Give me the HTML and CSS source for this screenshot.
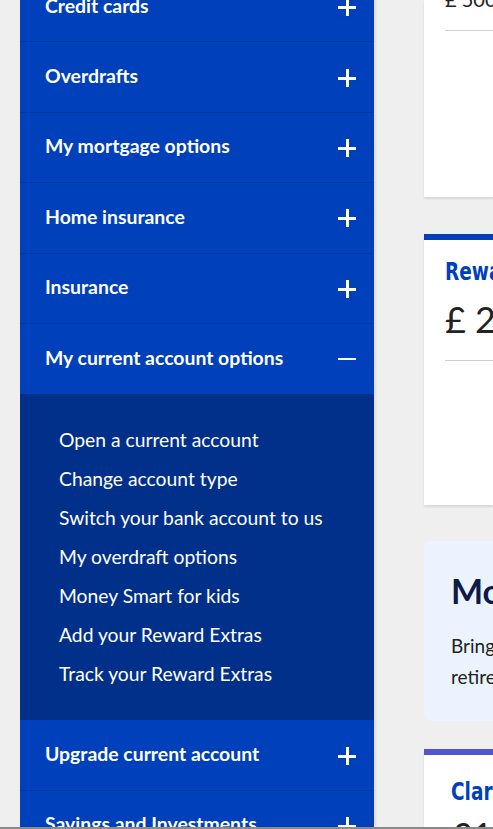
FILE: index.html
```html
<!DOCTYPE html>
<html lang="en">
<head>
    <meta charset="UTF-8">
    <meta name="viewport" content="width=device-width, initial-scale=1.0">
    <title>My current account options</title>
    <link rel="stylesheet" href="styles.css">
</head>
<body>

<div class="page">
    <div class="layout">
        <!-- Side navigation -->
        <nav class="side-nav">
            <div class="nav-item"><span>Credit cards</span><span class="toggle plus"></span></div>
            <div class="nav-item"><span>Overdrafts</span><span class="toggle plus"></span></div>
            <div class="nav-item"><span>My mortgage options</span><span class="toggle plus"></span></div>
            <div class="nav-item"><span>Home insurance</span><span class="toggle plus"></span></div>
            <div class="nav-item"><span>Insurance</span><span class="toggle plus"></span></div>
            <div class="nav-item open"><span>My current account options</span><span class="toggle minus"></span></div>
            <ul class="sub-nav">
                <li><a href="#">Open a current account</a></li>
                <li><a href="#">Change account type</a></li>
                <li><a href="#">Switch your bank account to us</a></li>
                <li><a href="#">My overdraft options</a></li>
                <li><a href="#">Money Smart for kids</a></li>
                <li><a href="#">Add your Reward Extras</a></li>
                <li><a href="#">Track your Reward Extras</a></li>
            </ul>
            <div class="nav-item"><span>Upgrade current account</span><span class="toggle plus"></span></div>
            <div class="nav-item"><span>Savings and Investments</span><span class="toggle plus"></span></div>
        </nav>

        <!-- Right column -->
        <div class="cards">
            <div class="card first">
                <div class="amount small">£ 500.00</div>
                <div class="rule"></div>
            </div>
            <div class="card accent">
                <h3 class="card-title">Reward Extras</h3>
                <div class="amount">£ 2.00</div>
                <div class="rule"></div>
            </div>
            <div class="promo">
                <h2>Money Smart</h2>
                <p>Bring your pensions together<br>retirement planning</p>
            </div>
            <div class="card accent purple">
                <h3 class="card-title">Clarity</h3>
                <div class="amount">£11.00</div>
            </div>
        </div>
    </div>
</div>

</body>
</html>
```

FILE: styles.css
```css
/* General Styles */
body {
    margin: 0;
    background-color: #efefef;
    font-family: Lato, 'Open Sans', sans-serif;
}

.page {
    height: 827px;
    overflow: hidden;
    border-bottom: 2px solid #8a8a8a;
}

.layout {
    display: flex;
    align-items: flex-start;
    gap: 50px;
    margin-top: -28px;
    padding-left: 20px;
}

/* Side navigation */
.side-nav {
    width: 354px;
    flex-shrink: 0;
    background-color: #0040bb;
    box-shadow: 2px 0 2px rgba(0, 0, 0, 0.08);
}

.nav-item {
    display: flex;
    justify-content: space-between;
    align-items: center;
    height: 70.4px;
    box-sizing: border-box;
    padding: 0 18px 3px 25px;
    border-bottom: 1px solid #0037a6;
    color: #fff;
    font-size: 19.4px;
    font-weight: 700;
}

.nav-item.open {
    border-bottom: none;
}

.toggle {
    position: relative;
    width: 18px;
    height: 18px;
    margin-top: 4px;
}

.toggle::before,
.toggle::after {
    content: '';
    position: absolute;
    background-color: #fff;
}

.toggle::before {
    left: 0;
    top: 8px;
    width: 18px;
    height: 3px;
}

.plus::after {
    left: 8px;
    top: 0;
    width: 3px;
    height: 18px;
}

.minus::before {
    top: 7px;
    height: 2px;
}

.sub-nav {
    list-style: none;
    margin: 0;
    padding: 26px 0 27px 39px;
    background-color: #00308a;
}

.sub-nav li {
    height: 39px;
    display: flex;
    align-items: center;
}

.sub-nav a {
    color: #fff;
    text-decoration: none;
    font-size: 19.3px;
}

/* Cards */
.cards {
    flex: 1;
    min-width: 0;
    display: flex;
    flex-direction: column;
    margin-top: 28px;
}

.card {
    background-color: #fff;
    padding: 0 0 0 21px;
    box-shadow: 0 2px 2px rgba(0, 0, 0, 0.1);
    white-space: nowrap;
    overflow: hidden;
}

.card.first {
    height: 197px;
    box-sizing: border-box;
}

.card.accent {
    border-top: 6px solid #0040bb;
    height: 271px;
    box-sizing: border-box;
    padding-top: 17px;
    margin-top: 37px;
}

.card.purple {
    border-top-color: #5252d4;
    padding-left: 27px;
    padding-top: 22px;
    margin-top: 28px;
}

.card-title {
    display: inline-block;
    margin: 0;
    color: #0040bb;
    font-family: 'DejaVu Sans', sans-serif;
    font-size: 25px;
    font-weight: 700;
    line-height: 30px;
    transform: scaleX(0.74);
    transform-origin: left center;
}

.amount {
    color: #222;
    font-size: 36px;
    line-height: 44px;
    margin-top: 10px;
}

.purple .amount {
    margin-top: 6px;
}

.amount.small {
    font-size: 20px;
    line-height: 22px;
    margin-top: -12px;
}

.rule {
    height: 1px;
    background-color: #cfcfcf;
    margin-top: 19px;
}

.card.first .rule {
    margin-top: 20px;
}

.promo {
    background-color: #ebf4fe;
    border-radius: 8px 0 0 8px;
    height: 180px;
    box-sizing: border-box;
    padding: 28px 0 0 27px;
    margin-top: 36px;
    white-space: nowrap;
    overflow: hidden;
}

.promo h2 {
    margin: 0;
    color: #0d1b48;
    font-size: 34px;
    font-weight: 700;
    line-height: 44px;
}

.promo p {
    margin: 17px 0 0;
    color: #222;
    font-size: 19px;
    line-height: 31px;
}
```
